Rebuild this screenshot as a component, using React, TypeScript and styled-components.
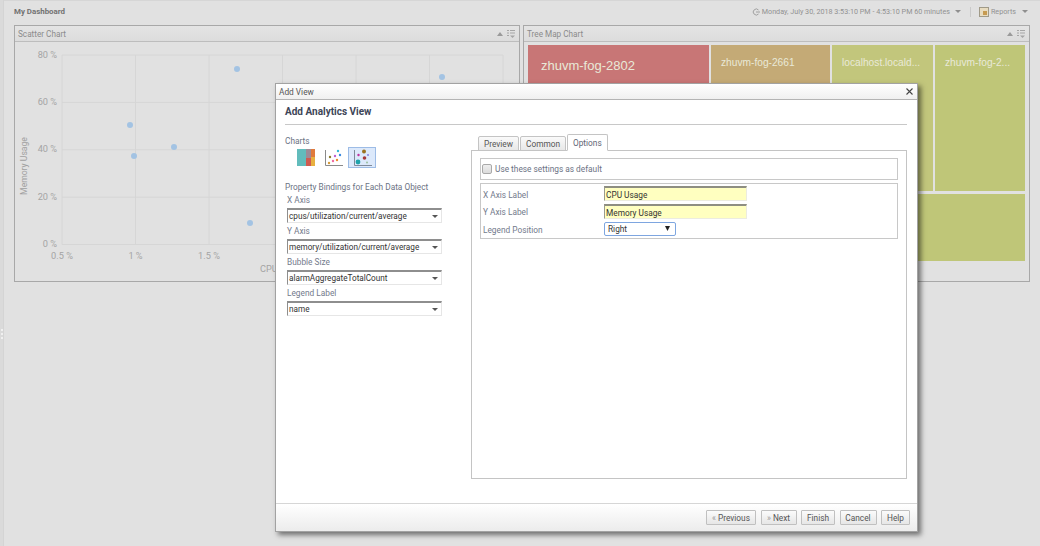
import React from 'react';
import styled, {createGlobalStyle} from 'styled-components';

const GlobalStyle = createGlobalStyle`
    html, body {
        margin: 0;
        padding: 0;
        background: #e1e1e1;
    }
    body {
        font-family: Roboto, 'Liberation Sans', Arial, sans-serif;
        font-size: 8.3px;
        overflow: hidden;
    }
`;

const Page = styled.div`
    position: relative;
    display: flex;
    width: 1040px;
    height: 546px;
    background: #e1e1e1;
    overflow: hidden;
`;

const Splitter = styled.div`
    flex: none;
    width: 4px;
    display: flex;
    flex-direction: column;
    align-items: center;
    justify-content: center;
    gap: 2px;
    padding-top: 122px;
    box-sizing: border-box;
    background: #dadada;
    border-right: 1px solid #d4d4d4;
`;

const SplitterDot = styled.span`
    width: 2px;
    height: 2px;
    background: #f0f0f0;
`;

const Content = styled.div`
    flex: 1;
    min-width: 0;
    box-sizing: border-box;
    padding: 0 10px 0 10px;
    border-top: 1px solid #d6d6d6;
`;

const TopBar = styled.div`
    display: flex;
    justify-content: space-between;
    align-items: center;
    height: 21px;
    padding: 0 2px 0 0;
    margin-bottom: 3px;
    color: #858585;
`;

const PageTitle = styled.div`
    font-weight: bold;
    font-size: 7.9px;
    color: #727272;
`;

const TopTools = styled.div`
    display: flex;
    align-items: center;
    font-size: 7.2px;
    color: #919191;
`;

const Caret = styled.span<{$left: number}>`
    display: inline-block;
    width: 0;
    height: 0;
    margin-left: ${props => props.$left}px;
    border-left: 3px solid transparent;
    border-right: 3px solid transparent;
    border-top: 3.5px solid #8f8f8f;
`;

const ToolDivider = styled.span`
    width: 1px;
    height: 10px;
    margin: 0 8px 0 9px;
    background: #cacaca;
`;

const Panels = styled.div`
    display: grid;
    grid-template-columns: 506px 507px;
    column-gap: 3px;
`;

const Panel = styled.section`
    height: 257px;
    box-sizing: border-box;
    border: 1px solid #a8a8a8;
    display: flex;
    flex-direction: column;
`;

const PanelHead = styled.header`
    flex: none;
    height: 15px;
    display: flex;
    align-items: center;
    justify-content: space-between;
    padding: 0 4px 0 3px;
    background: linear-gradient(#e4e4e4, #dcdcdc);
    border-bottom: 1px solid #bdbdbd;
    font-size: 8.2px;
    color: #8b8b8b;
`;

const PanelTools = styled.div`
    display: flex;
    align-items: center;
    gap: 4px;
`;

const ChartSvg = styled.svg`
    display: block;
    flex: 1;
    font-family: Roboto, 'Liberation Sans', Arial, sans-serif;
`;

const TreeMap = styled.div`
    display: grid;
    grid-template-columns: 181px 119px 101px 90px;
    grid-template-rows: 146px 67px;
    gap: 3px 2px;
    padding: 3px 4px;
    font-family: 'Liberation Sans', Arial, sans-serif;
`;

const Tile = styled.div<{$color: string; $size?: number; $tall?: boolean; $wide?: boolean}>`
    background: ${props => props.$color};
    color: #e9e9d8;
    font-size: ${props => props.$size ?? 10.2}px;
    padding: ${props => (props.$size ? '13px 13px' : '12px 10px')};
    overflow: hidden;
    white-space: nowrap;
    grid-row: ${props => (props.$tall ? 'span 2' : 'auto')};
    grid-column: ${props => (props.$wide ? 'span 2' : 'auto')};
`;

const Modal = styled.div`
    position: absolute;
    left: 275px;
    top: 83px;
    width: 643px;
    height: 449px;
    box-sizing: border-box;
    background: #fff;
    border: 1px solid #a2a2a2;
    box-shadow: 3px 3px 5px rgba(0, 0, 0, 0.5);
    display: flex;
    flex-direction: column;
    color: #6b7284;
`;

const ModalTitle = styled.div`
    flex: none;
    height: 15px;
    display: flex;
    align-items: center;
    justify-content: space-between;
    padding: 0 4px 0 3px;
    background: linear-gradient(#fff, #f0f0f0);
    border-bottom: 1px solid #b4b4b4;
    color: #555;
`;

const CloseGlyph = styled.svg`
    display: block;
`;

const ModalHeading = styled.h2`
    flex: none;
    margin: 0 10px 0 9px;
    padding-top: 6px;
    box-sizing: border-box;
    height: 25px;
    border-bottom: 1px solid #c8c8c8;
    font-size: 10px;
    font-weight: bold;
    color: #3d4557;
`;

const ModalBody = styled.div`
    flex: 1;
    display: flex;
    min-height: 0;
    padding: 10px 10px 24px 9px;
`;

const LeftColumn = styled.div`
    flex: none;
    width: 186px;
`;

const FieldGroup = styled.div`
    margin: -1px 0 0 2px;
    width: 155px;
`;

const SectionLabel = styled.div`
    height: 12px;
    line-height: 12px;
`;

const ChartChoices = styled.div`
    display: flex;
    align-items: center;
    margin: 0 0 13px 7px;
    height: 21px;
`;

const ChartChoice = styled.button<{$selected?: boolean}>`
    width: 28px;
    height: 21px;
    padding: 0;
    display: flex;
    align-items: center;
    justify-content: center;
    box-sizing: border-box;
    background: ${props => (props.$selected ? '#dce9fb' : 'transparent')};
    border: 1px solid ${props => (props.$selected ? '#9dbce6' : 'transparent')};
`;

const FieldLabel = styled.div`
    height: 16px;
    line-height: 17px;
    color: #737a8c;
`;

const SelectBox = styled.div`
    height: 15px;
    box-sizing: border-box;
    display: flex;
    align-items: center;
    justify-content: space-between;
    padding: 0 3px 0 1px;
    border: 1px solid #e6e6e6;
    border-top: 2px solid #8e8e8e;
    border-left: 1px solid #8e8e8e;
    font-size: 8.2px;
    color: #333;
    white-space: nowrap;
`;

const RightColumn = styled.div`
    flex: 1;
    display: flex;
    flex-direction: column;
    min-width: 0;
    margin-top: -1px;
`;

const Tabs = styled.div`
    flex: none;
    display: flex;
    align-items: flex-end;
    gap: 1px;
    height: 17px;
    padding-left: 7px;
    margin-bottom: -1px;
    position: relative;
`;

const Tab = styled.div<{$active?: boolean}>`
    height: ${props => (props.$active ? 17 : 15)}px;
    box-sizing: border-box;
    padding: 0 5px;
    display: flex;
    align-items: center;
    border: 1px solid #c4c4c4;
    border-bottom: ${props => (props.$active ? '1px solid #fff' : '1px solid #c4c4c4')};
    border-radius: 2px 2px 0 0;
    background: ${props => (props.$active ? '#fff' : 'linear-gradient(#fafafa, #e8e8e8)')};
    color: ${props => (props.$active ? '#5f6675' : '#555')};
`;

const TabContent = styled.div`
    flex: 1;
    border: 1px solid #c4c4c4;
    padding: 7px 8px;
    display: flex;
    flex-direction: column;
    gap: 3px;
`;

const OptionBox = styled.div`
    border: 1px solid #c8c8c8;
`;

const DefaultRow = styled.label`
    display: flex;
    align-items: center;
    gap: 3px;
    height: 20px;
    padding-left: 1px;
`;

const CheckBox = styled.span`
    width: 8px;
    height: 8px;
    border: 1px solid #a9a9a9;
    border-radius: 2px;
    background: linear-gradient(#eee, #dcdcdc);
`;

const OptionGrid = styled.div`
    display: grid;
    grid-template-columns: 123px 143px;
    grid-auto-rows: 17.5px;
    align-items: center;
    padding: 1px 0 0;
`;

const OptionLabel = styled.div`
    padding: 2px 0 0 2px;
    color: #737a8c;
`;

const YellowInput = styled.div`
    height: 15px;
    box-sizing: border-box;
    line-height: 14px;
    padding-left: 1px;
    background: #ffffc0;
    border: 1px solid #ecece0;
    border-top: 2px solid #8e8e82;
    border-left: 1px solid #9a9a8e;
    color: #333;
`;

const PositionSelect = styled.div`
    width: 72px;
    height: 14px;
    box-sizing: border-box;
    display: flex;
    align-items: center;
    justify-content: space-between;
    padding: 0 5px 0 3px;
    border: 1px solid #7ea6e0;
    border-radius: 2px;
    color: #333;
`;

const Footer = styled.div`
    flex: none;
    height: 28px;
    display: flex;
    justify-content: flex-end;
    align-items: center;
    gap: 4.5px;
    padding-right: 7px;
    box-sizing: border-box;
    border-top: 1px solid #d6d6d6;
    background: linear-gradient(#fff, #ececec);
`;

const FooterButton = styled.button<{$width: number}>`
    width: ${props => props.$width}px;
    height: 15px;
    padding: 0;
    box-sizing: border-box;
    font: inherit;
    color: #555;
    border: 1px solid #c0c0c0;
    border-radius: 1px;
    background: linear-gradient(#fbfbfb, #e6e6e6);
`;

const ArrowMark = styled.span`
    color: #9a9a9a;
`;

const TopIcon = styled.svg`
    margin-right: 2px;
`;

const xTicks = [62, 135.5, 209, 282.5, 356, 429.5, 503];
const yTicks = [
    {y: 54, label: '80 %'},
    {y: 101.4, label: '60 %'},
    {y: 148.8, label: '40 %'},
    {y: 196.2, label: '20 %'},
    {y: 243.5, label: '0 %'}
];
const xLabels = [
    {x: 62, label: '0.5 %'},
    {x: 135.5, label: '1 %'},
    {x: 209, label: '1.5 %'}
];
const points = [
    [237, 68],
    [442, 76],
    [130, 124],
    [134, 155],
    [174, 146],
    [250, 222]
];

// svg coordinates are page coordinates, panel body starts at (15, 41)
const ScatterChart = () => (
    <ChartSvg viewBox="15 41 504 239" width="504" height="239">
        {xTicks.map(x => (
            <line key={x} x1={x} x2={x} y1={54} y2={243.5} stroke="#d6d6d6" strokeWidth="1" />
        ))}
        {yTicks.map(t => (
            <React.Fragment key={t.label}>
                <line x1={62} x2={503} y1={t.y} y2={t.y} stroke="#d6d6d6" strokeWidth="1" />
                <text x={57} y={t.y + 2.5} textAnchor="end" fontSize="9.2" fill="#a4a4a4">
                    {t.label}
                </text>
            </React.Fragment>
        ))}
        {xLabels.map(t => (
            <text key={t.label} x={t.x} y={258} textAnchor="middle" fontSize="9.2" fill="#a4a4a4">
                {t.label}
            </text>
        ))}
        <text x={260} y={271} fontSize="9.2" fill="#a4a4a4">
            CPU Usage
        </text>
        <text transform="translate(27 165) rotate(-90)" textAnchor="middle" fontSize="8.6" fill="#a0a0a0">
            Memory Usage
        </text>
        {points.map(([x, y]) => (
            <circle key={x} cx={x} cy={y} r="3" fill="#a3c3e3" />
        ))}
    </ChartSvg>
);

const PanelIcons = () => (
    <PanelTools>
        <svg width="6" height="4" viewBox="0 0 6 4">
            <path d="M0 4 L3 0 L6 4 Z" fill="#9a9a9a" />
        </svg>
        <svg width="8" height="8" viewBox="0 0 8 8" fill="#a6a6a6">
            <rect x="0" y="0" width="2" height="1" />
            <rect x="3" y="0" width="5" height="1" />
            <rect x="0" y="2.5" width="2" height="1" />
            <rect x="3" y="2.5" width="5" height="1" />
            <rect x="0" y="5" width="2" height="1" />
            <path d="M3 5.5 H8 L5.5 8 Z" />
        </svg>
    </PanelTools>
);

const TreemapIcon = () => (
    <svg width="18" height="17" viewBox="0 0 18 17">
        <rect x="0" y="0" width="9" height="17" fill="#62bcbc" />
        <rect x="9" y="0" width="5" height="9" fill="#9e8a96" />
        <rect x="9" y="9" width="5" height="8" fill="#d05a50" />
        <rect x="14" y="0" width="4" height="8" fill="#e07a3c" />
        <rect x="14" y="8" width="4" height="9" fill="#e8b040" />
    </svg>
);

const ScatterIcon = () => (
    <svg width="18" height="17" viewBox="0 0 18 17">
        <path d="M0.5 1 V16.5 H18" fill="none" stroke="#8a8a8a" strokeWidth="1" />
        <circle cx="4" cy="14" r="1.2" fill="#d49a3a" />
        <circle cx="5" cy="8" r="1.2" fill="#8b7a2c" />
        <circle cx="8" cy="12" r="1.2" fill="#ef6aa0" />
        <circle cx="10" cy="7" r="1.2" fill="#c060d0" />
        <circle cx="12" cy="11" r="1.2" fill="#ee8a2c" />
        <circle cx="13" cy="2" r="1.2" fill="#35b8d8" />
        <circle cx="15" cy="6" r="1.2" fill="#3a8ae0" />
    </svg>
);

const BubbleIcon = () => (
    <svg width="19" height="18" viewBox="0 0 19 18">
        <path d="M1.5 1 V16.5 H19" fill="none" stroke="#7f8a9a" strokeWidth="1" />
        <circle cx="5" cy="13" r="2.4" fill="#1fa3ab" />
        <circle cx="5.5" cy="6" r="1.2" fill="#c030a0" />
        <circle cx="11" cy="2.5" r="2" fill="#9a7420" />
        <circle cx="11.5" cy="9" r="1.8" fill="#a83a3a" />
        <circle cx="15" cy="6" r="1.1" fill="#8a8ae0" />
        <circle cx="14" cy="13.5" r="1" fill="#9ac0a0" />
    </svg>
);

const SmallArrow = () => (
    <svg width="6" height="3" viewBox="0 0 6 3">
        <path d="M0 0 H6 L3 3 Z" fill="#555" />
    </svg>
);

const PositionArrow = () => (
    <svg width="5" height="5" viewBox="0 0 5 5">
        <path d="M0 0 H5 L2.5 5 Z" fill="#222" />
    </svg>
);

const bindings = [
    {label: 'X Axis', value: 'cpus/utilization/current/average'},
    {label: 'Y Axis', value: 'memory/utilization/current/average'},
    {label: 'Bubble Size', value: 'alarmAggregateTotalCount'},
    {label: 'Legend Label', value: 'name'}
];

const App = () => (
    <Page>
        <GlobalStyle />
        <Splitter>
            <SplitterDot />
            <SplitterDot />
            <SplitterDot />
        </Splitter>
        <Content>
            <TopBar>
                <PageTitle>My Dashboard</PageTitle>
                <TopTools>
                    <TopIcon width="8" height="8" viewBox="0 0 8 8">
                        <path d="M6.5 2 A3 3 0 1 0 6.5 6 M4 4 H8" fill="none" stroke="#a0a0a0" strokeWidth="1" />
                    </TopIcon>
                    Monday, July 30, 2018 3:53:10 PM - 4:53:10 PM 60 minutes
                    <Caret $left={5} />
                    <ToolDivider />
                    <TopIcon width="10" height="10" viewBox="0 0 10 10">
                        <rect x="0.5" y="0.5" width="9" height="9" fill="#e8dcc0" stroke="#a09a88" />
                        <rect x="4" y="4" width="4" height="4" fill="#c69a50" />
                    </TopIcon>
                    Reports
                    <Caret $left={6} />
                </TopTools>
            </TopBar>
            <Panels>
                <Panel>
                    <PanelHead>
                        Scatter Chart
                        <PanelIcons />
                    </PanelHead>
                    <ScatterChart />
                </Panel>
                <Panel>
                    <PanelHead>
                        Tree Map Chart
                        <PanelIcons />
                    </PanelHead>
                    <TreeMap>
                        <Tile $color="#c87676" $size={13} $tall>
                            zhuvm-fog-2802
                        </Tile>
                        <Tile $color="#c4aa76" $tall>
                            zhuvm-fog-2661
                        </Tile>
                        <Tile $color="#c2c67c">localhost.locald...</Tile>
                        <Tile $color="#bfc678">zhuvm-fog-2...</Tile>
                        <Tile $color="#bfc678" $wide />
                    </TreeMap>
                </Panel>
            </Panels>
        </Content>
        <Modal>
            <ModalTitle>
                Add View
                <CloseGlyph width="7" height="7" viewBox="0 0 7 7">
                    <path d="M0.5 0.5 L6.5 6.5 M6.5 0.5 L0.5 6.5" stroke="#444" strokeWidth="1.1" />
                </CloseGlyph>
            </ModalTitle>
            <ModalHeading>Add Analytics View</ModalHeading>
            <ModalBody>
                <LeftColumn>
                    <SectionLabel>Charts</SectionLabel>
                    <ChartChoices>
                        <ChartChoice>
                            <TreemapIcon />
                        </ChartChoice>
                        <ChartChoice>
                            <ScatterIcon />
                        </ChartChoice>
                        <ChartChoice $selected>
                            <BubbleIcon />
                        </ChartChoice>
                    </ChartChoices>
                    <SectionLabel>Property Bindings for Each Data Object</SectionLabel>
                    <FieldGroup>
                        {bindings.map(item => (
                            <React.Fragment key={item.label}>
                                <FieldLabel>{item.label}</FieldLabel>
                                <SelectBox>
                                    {item.value}
                                    <SmallArrow />
                                </SelectBox>
                            </React.Fragment>
                        ))}
                    </FieldGroup>
                </LeftColumn>
                <RightColumn>
                    <Tabs>
                        <Tab>Preview</Tab>
                        <Tab>Common</Tab>
                        <Tab $active>Options</Tab>
                    </Tabs>
                    <TabContent>
                        <OptionBox>
                            <DefaultRow>
                                <CheckBox />
                                Use these settings as default
                            </DefaultRow>
                        </OptionBox>
                        <OptionBox>
                            <OptionGrid>
                                <OptionLabel>X Axis Label</OptionLabel>
                                <YellowInput>CPU Usage</YellowInput>
                                <OptionLabel>Y Axis Label</OptionLabel>
                                <YellowInput>Memory Usage</YellowInput>
                                <OptionLabel>Legend Position</OptionLabel>
                                <PositionSelect>
                                    Right
                                    <PositionArrow />
                                </PositionSelect>
                            </OptionGrid>
                        </OptionBox>
                    </TabContent>
                </RightColumn>
            </ModalBody>
            <Footer>
                <FooterButton $width={50}>
                    <ArrowMark>«</ArrowMark> Previous
                </FooterButton>
                <FooterButton $width={36}>
                    <ArrowMark>»</ArrowMark> Next
                </FooterButton>
                <FooterButton $width={34}>Finish</FooterButton>
                <FooterButton $width={37}>Cancel</FooterButton>
                <FooterButton $width={29}>Help</FooterButton>
            </Footer>
        </Modal>
    </Page>
);

export default App;
